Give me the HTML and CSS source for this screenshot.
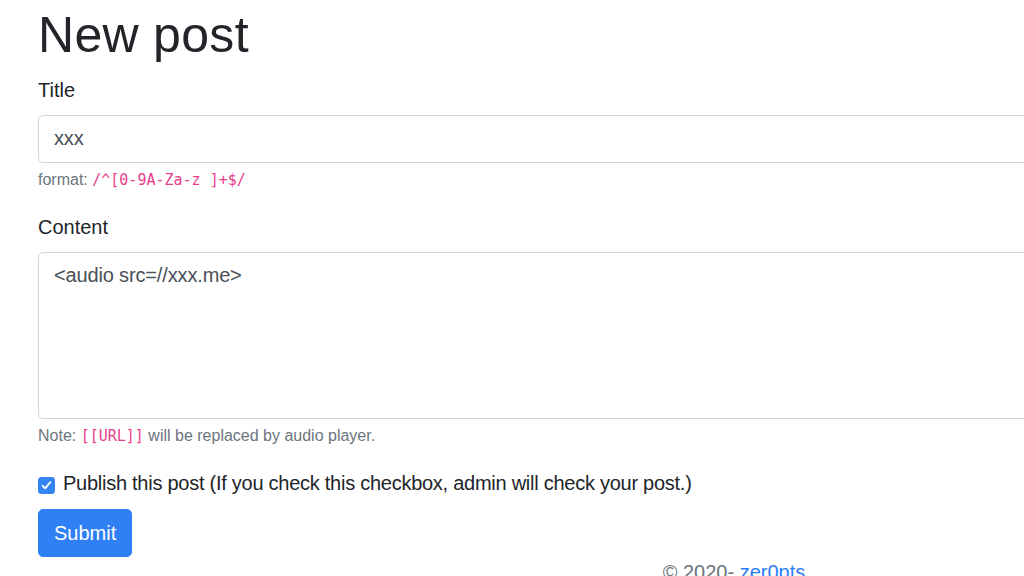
FILE: index.html
```html
<!DOCTYPE html>
<html lang="en">
<head>
<meta charset="utf-8">
<title>New post</title>
<link rel="stylesheet" href="styles.css">
</head>
<body>
<div class="container">
  <h1 class="title">New post</h1>
  <form class="post-form">
    <div class="form-group">
      <label class="label" for="title">Title</label>
      <input class="form-control" id="title" type="text" value="xxx">
      <small class="help">format: <code>/^[0-9A-Za-z ]+$/</code></small>
    </div>
    <div class="form-group">
      <label class="label" for="content">Content</label>
      <textarea class="form-control textarea" id="content" rows="5">&lt;audio src=//xxx.me&gt;</textarea>
      <small class="help">Note: <code>[[URL]]</code> will be replaced by audio player.</small>
    </div>
    <div class="form-check">
      <span class="check-box">
        <svg width="11" height="11" viewBox="0 0 11 11"><path d="M1.6 5.8 L4.2 8.3 L9.4 2.2" fill="none" stroke="#fff" stroke-width="1.8" stroke-linecap="round" stroke-linejoin="round"/></svg>
      </span>
      <label class="check-label">Publish this post (If you check this checkbox, admin will check your post.)</label>
    </div>
    <button class="btn" type="button">Submit</button>
  </form>
  <footer class="footer">© 2020- <a class="link" href="#">zer0pts</a></footer>
</div>
</body>
</html>
```

FILE: styles.css
```css
html, body {
  margin: 0;
  padding: 0;
  overflow: hidden;
  background: #fff;
}
body {
  font-family: "Liberation Sans", Arial, sans-serif;
  font-size: 20px;
  line-height: 1.5;
  color: #212529;
}
.container {
  width: 1392px;
  padding: 5px 38px 0;
}
.title {
  font-size: 50px;
  font-weight: 500;
  line-height: 1.2;
  margin: 0 0 10px;
  color: #212529;
  letter-spacing: 0.3px;
}
.post-form {
  margin: 0;
}
.form-group {
  margin-bottom: 20px;
}
.label {
  display: block;
  margin-bottom: 10px;
}
.form-control {
  display: block;
  box-sizing: border-box;
  width: 100%;
  height: 47.5px;
  padding: 7.5px 15px;
  font-family: inherit;
  font-size: 20px;
  line-height: 1.5;
  letter-spacing: -0.15px;
  color: #495057;
  background: #fff;
  border: 1.25px solid #ced4da;
  border-radius: 5px;
  margin: 0;
  outline: none;
}
.textarea {
  height: 167.5px;
  resize: none;
  overflow: hidden;
}
.help {
  display: block;
  margin-top: 5px;
  font-size: 16px;
  line-height: 1.5;
  color: #6c757d;
}
.help code {
  font-family: "DejaVu Sans Mono", "Liberation Mono", monospace;
  font-size: 15px;
  color: #e83e8c;
}
.form-check {
  display: flex;
  align-items: flex-start;
  margin-bottom: 11px;
}
.check-box {
  box-sizing: border-box;
  width: 17px;
  height: 17px;
  margin-top: 9px;
  margin-right: 8px;
  border-radius: 3.5px;
  background: #3484f4;
  display: flex;
  align-items: center;
  justify-content: center;
  flex: none;
}
.check-box svg {
  display: block;
}
.check-label {
  line-height: 30px;
  letter-spacing: -0.26px;
}
.btn {
  display: block;
  height: 47.5px;
  padding: 7.5px 15px;
  font-family: inherit;
  font-size: 20px;
  line-height: 1.5;
  color: #fff;
  background: #2f80f5;
  border: 1.25px solid #2f80f5;
  border-radius: 5px;
}
.footer {
  text-align: center;
  color: #6c757d;
  line-height: 30px;
}
.link {
  color: #2a7ef5;
  text-decoration: none;
}
```
